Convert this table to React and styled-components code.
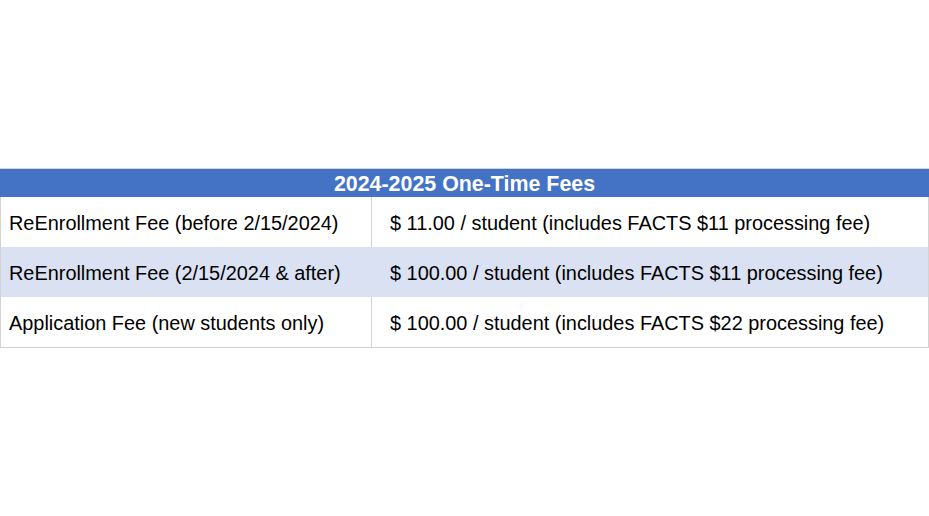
import React from "react";
import styled, { createGlobalStyle } from "styled-components";

const Global = createGlobalStyle`
  html, body { margin: 0; padding: 0; background: #ffffff; }
  body { font-family: Arial, "Liberation Sans", Helvetica, sans-serif; }
`;

const Page = styled.div`
  min-height: 516px;
  display: flex;
  align-items: center;
`;

const Table = styled.div`
  width: 929px;
  box-sizing: border-box;
  border: 1px solid #d3d3d3;
`;

const Header = styled.div`
  height: 28px;
  box-sizing: border-box;
  padding-top: 2px;
  margin: 0 -1px;
  background: #4472c4;
  color: #ffffff;
  font-weight: bold;
  font-size: 21.4px;
  display: flex;
  align-items: center;
  justify-content: center;
`;

const Row = styled.div`
  display: grid;
  grid-template-columns: 371px 1fr;
  height: 50px;
  background: ${(p) => (p.$shaded ? "#d9e1f2" : "#ffffff")};
`;

const Cell = styled.div`
  box-sizing: border-box;
  display: flex;
  align-items: center;
  font-size: 19.9px;
  color: #000000;
  white-space: nowrap;
  padding-left: ${(p) => (p.$value ? "18px" : "8px")};
  padding-top: 2px;
  border-right: ${(p) => (p.$divider ? "1px solid #d3d3d3" : "none")};
`;

const rows = [
  ["ReEnrollment Fee (before 2/15/2024)", "$ 11.00 / student (includes FACTS $11 processing fee)"],
  ["ReEnrollment Fee (2/15/2024 & after)", "$ 100.00 / student (includes FACTS $11 processing fee)"],
  ["Application Fee (new students only)", "$ 100.00 / student (includes FACTS $22 processing fee)"],
];

export default function App() {
  return (
    <>
      <Global />
      <Page>
        <Table>
          <Header>2024-2025 One-Time Fees</Header>
          {rows.map(([label, value], i) => {
            const shaded = i % 2 === 1;
            return (
              <Row key={i} $shaded={shaded}>
                <Cell $divider={!shaded}>{label}</Cell>
                <Cell $value>{value}</Cell>
              </Row>
            );
          })}
        </Table>
      </Page>
    </>
  );
}
